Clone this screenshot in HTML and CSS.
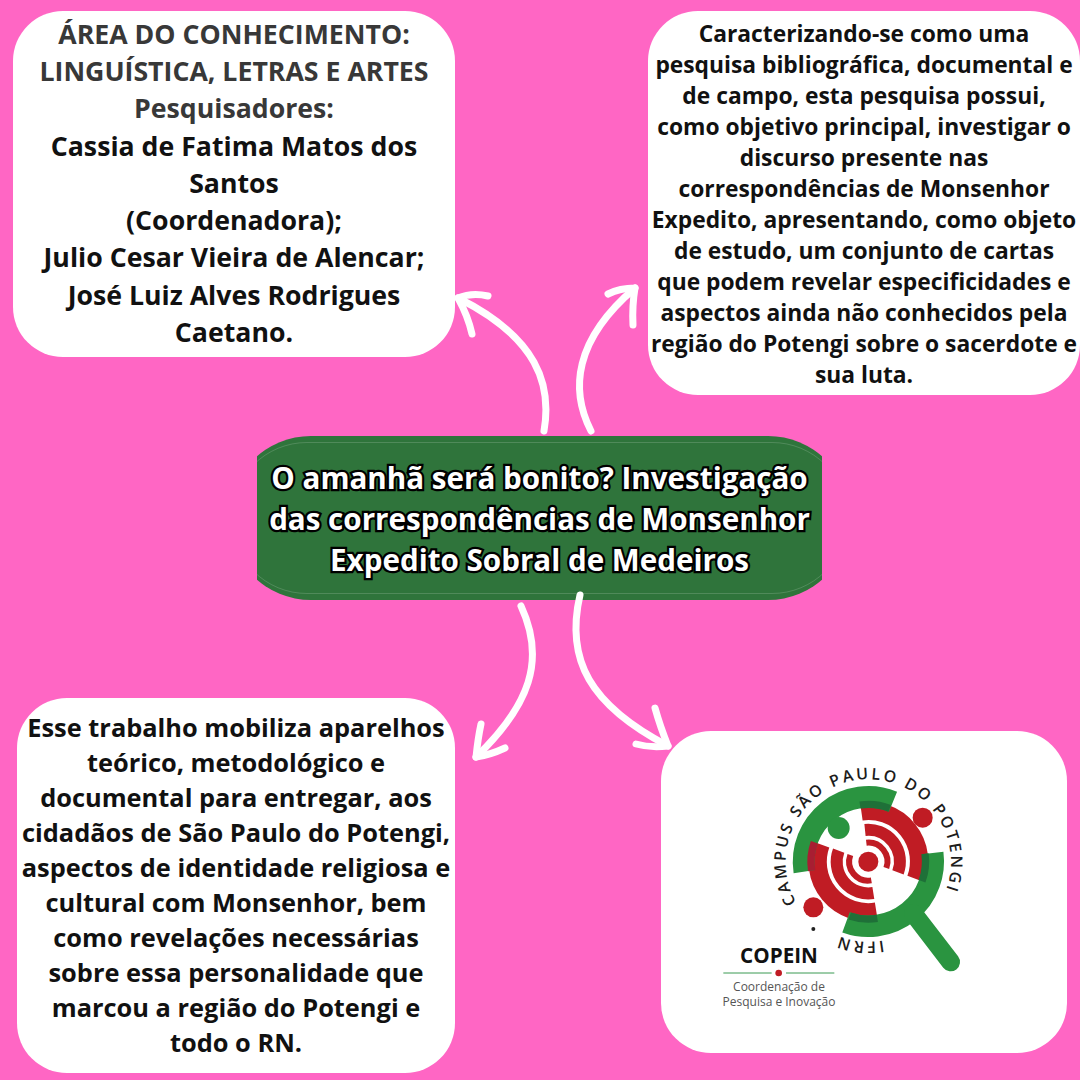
FILE: index.html
```html
<!DOCTYPE HTML>
<html lang="pt-BR">
    <head>
        <meta charset="UTF-8">
        <title>Monsenhor Expedito</title>
        <link rel="stylesheet" href="styles.css">
    </head>

    <body>
        <div class="canvas">
            <div class="card card-area">
                <p>
                    <span class="muted">ÁREA DO CONHECIMENTO:<br>LINGUÍSTICA, LETRAS E ARTES<br>Pesquisadores:</span><br>
                    Cassia de Fatima Matos dos<br>Santos<br>(Coordenadora);<br>Julio Cesar Vieira de Alencar;<br>José Luiz Alves Rodrigues<br>Caetano.
                </p>
            </div>

            <div class="card card-objetivo">
                <p>Caracterizando-se como uma<br>pesquisa bibliográfica, documental e<br>de campo, esta pesquisa possui,<br>como objetivo principal, investigar o<br>discurso presente nas<br>correspondências de Monsenhor<br>Expedito, apresentando, como objeto<br>de estudo, um conjunto de cartas<br>que podem revelar especificidades e<br>aspectos ainda não conhecidos pela<br>região do Potengi sobre o sacerdote e<br>sua luta.</p>
            </div>

            <div class="topic">
                <h1>O amanhã será bonito? Investigação<br>das correspondências de Monsenhor<br>Expedito Sobral de Medeiros</h1>
            </div>

            <div class="card card-trabalho">
                <p>Esse trabalho mobiliza aparelhos<br>teórico, metodológico e<br>documental para entregar, aos<br>cidadãos de São Paulo do Potengi,<br>aspectos de identidade religiosa e<br>cultural com Monsenhor, bem<br>como revelações necessárias<br>sobre essa personalidade que<br>marcou a região do Potengi e<br>todo o RN.</p>
            </div>

            <div class="card card-logo">
                <svg class="logo" viewBox="0 0 900 840" width="300" height="280">
                    <defs>
                        <path id="logo-ring" d="M289 458 A248 248 0 1 1 738 420"/>
                        <path id="logo-ring-low" d="M563 568 A240 240 0 0 1 400 551"/>
                    </defs>
                    <!-- red sectors -->
                    <g fill="none" stroke="#c01c24">
                        <path stroke-width="55" d="M484 184 A152 152 0 0 1 648 387"/>
                        <path stroke-width="36" d="M495 240 A95 95 0 0 1 594 367"/>
                        <path stroke-width="18" d="M499 278 A57 57 0 0 1 559 354"/>
                        <path stroke-width="55" d="M529 485 A152 152 0 0 1 362 283"/>
                        <path stroke-width="36" d="M520 429 A95 95 0 0 1 416 302"/>
                        <path stroke-width="18" d="M514 391 A57 57 0 0 1 451 315"/>
                    </g>
                    <circle cx="505" cy="335" r="30" fill="#c01c24"/>
                    <circle cx="668" cy="203" r="30" fill="#c01c24"/>
                    <circle cx="340" cy="472" r="30" fill="#c01c24"/>
                    <!-- green ring and handle -->
                    <g fill="none" stroke="#2a9440">
                        <path stroke-width="65" d="M579 155 A195 195 0 0 0 313 365"/>
                        <path stroke-width="65" d="M698 309 A195 195 0 0 1 438 517"/>
                        <path stroke-width="56" stroke-linecap="round" d="M640 490 L752 636"/>
                    </g>
                    <circle cx="416" cy="234" r="33" fill="#2a9440"/>
                    <!-- overlaps -->
                    <g fill="none" stroke-width="22">
                        <path stroke="#1f7038" d="M480 165 A172 172 0 0 1 569 175"/>
                        <path stroke="#1f7038" d="M675 311 A172 172 0 0 1 666 394"/>
                        <path stroke="#1f7038" d="M532 505 A172 172 0 0 1 449 498"/>
                        <path stroke="#a81e32" d="M335 362 A172 172 0 0 1 343 277"/>
                    </g>
                    <text class="logo-ring-text"><textPath href="#logo-ring" textLength="990" lengthAdjust="spacing">CAMPUS SÃO PAULO DO POTENGI</textPath></text>
                    <text class="logo-ring-text logo-ring-low"><textPath href="#logo-ring-low" startOffset="50%">IFRN</textPath></text>
                    <circle cx="340" cy="537" r="6" fill="#222"/>
                    <text class="logo-name" x="237" y="640">COPEIN</text>
                    <path d="M70 669 H215 M258 669 H403" stroke="#3b9a52" stroke-width="3"/>
                    <circle cx="236" cy="669" r="10" fill="#c01c24"/>
                    <text class="logo-sub" x="237" y="722">Coordenação de</text>
                    <text class="logo-sub" x="237" y="767">Pesquisa e Inovação</text>
                </svg>
            </div>

            <svg class="arrows" viewBox="0 0 1080 1080" width="1080" height="1080">
                <g fill="none" stroke="#fff" stroke-width="7" stroke-linecap="round" stroke-linejoin="round">
                    <path d="M544 431 C552 385 538 338 458 298"/>
                    <path d="M458 298 Q472 292 488 296 M458 298 Q468 316 472 334"/>
                    <path d="M591 431 C570 390 574 340 635 288"/>
                    <path d="M635 288 Q620 288 608 294 M635 288 Q632 306 633 325"/>
                    <path d="M521 606 C546 660 530 705 476 757"/>
                    <path d="M476 757 Q490 755 505 748 M476 757 Q478 738 481 724"/>
                    <path d="M580 595 C565 660 590 705 668 746"/>
                    <path d="M668 746 Q650 748 636 744 M668 746 Q660 726 655 708"/>
                </g>
            </svg>
        </div>
    </body>
</html>
```

FILE: styles.css
```css
body {
    margin: 0;
    background-color: #ff66c4;
    font-family: "Open Sans", "Liberation Sans", sans-serif;
}
p, h1 {
    margin: 0;
}

.canvas {
    position: relative;
    width: 1080px;
    height: 1080px;
    overflow: hidden;
}

/*CARDS*/
.card {
    position: absolute;
    display: flex;
    align-items: center;
    justify-content: center;
    background: #fff;
    border-radius: 50px;
    text-align: center;
    font-weight: 700;
    color: #111;
    white-space: nowrap;
}
.card-area {
    left: 13px;
    top: 11px;
    width: 442px;
    height: 346px;
    padding-bottom: 3px;
    box-sizing: border-box;
    font-size: 26.7px;
    line-height: 37.3px;
}
.muted {
    color: #383838;
}
.card-objetivo {
    left: 648px;
    top: 11px;
    width: 432px;
    height: 384px;
    padding-top: 1px;
    box-sizing: border-box;
    font-size: 22.8px;
    line-height: 31px;
}
.card-trabalho {
    left: 17px;
    top: 698px;
    width: 438px;
    height: 375px;
    padding-bottom: 2px;
    box-sizing: border-box;
    font-size: 25.4px;
    line-height: 35px;
}
.card-logo {
    left: 661px;
    top: 731px;
    width: 406px;
    height: 322px;
}
/*CARDS*/

/*TOPIC*/
.topic {
    position: absolute;
    left: 257px;
    top: 436px;
    width: 565px;
    height: 164px;
    display: flex;
    align-items: center;
    justify-content: center;
    overflow: hidden;
}
.topic::before {
    content: "";
    position: absolute;
    inset: 0 -28px;
    background-color: #2f743b;
    border-radius: 82px;
}
.topic::after {
    content: "";
    position: absolute;
    inset: 6px -26px;
    border: 1px solid rgba(255, 255, 255, 0.16);
    border-radius: 76px;
}
.topic h1 {
    position: relative;
    z-index: 1;
    font-size: 29.6px;
    line-height: 41px;
    font-weight: 700;
    text-align: center;
    white-space: nowrap;
    color: #fff;
    -webkit-text-stroke: 4.5px #000;
    paint-order: stroke fill;
}
/*TOPIC*/

/*LOGO*/
.logo {
    position: absolute;
    left: 39px;
    top: 19px;
}
.logo-ring-text {
    font-size: 48px;
    font-weight: 600;
    fill: #1c1c1c;
}
.logo-ring-low {
    letter-spacing: 8px;
    text-anchor: middle;
}
.logo-name {
    font-size: 62px;
    font-weight: 700;
    fill: #111;
    text-anchor: middle;
}
.logo-sub {
    font-size: 36px;
    font-weight: 400;
    fill: #555;
    text-anchor: middle;
}
/*LOGO*/

.arrows {
    position: absolute;
    left: 0;
    top: 0;
}
```
